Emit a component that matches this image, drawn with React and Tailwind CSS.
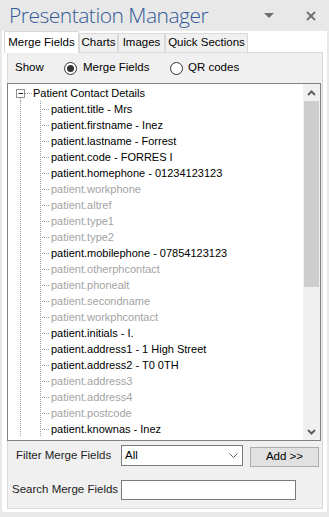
import React from 'react';

const FONT = { fontFamily: '"Liberation Sans", Arial, sans-serif' };

const ITEMS = [
  ['patient.title - Mrs', true],
  ['patient.firstname - Inez', true],
  ['patient.lastname - Forrest', true],
  ['patient.code - FORRES I', true],
  ['patient.homephone - 01234123123', true],
  ['patient.workphone', false],
  ['patient.altref', false],
  ['patient.type1', false],
  ['patient.type2', false],
  ['patient.mobilephone - 07854123123', true],
  ['patient.otherphcontact', false],
  ['patient.phonealt', false],
  ['patient.secondname', false],
  ['patient.workphcontact', false],
  ['patient.initials - I.', true],
  ['patient.address1 - 1 High Street', true],
  ['patient.address2 - T0 0TH', true],
  ['patient.address3', false],
  ['patient.address4', false],
  ['patient.postcode', false],
  ['patient.knownas - Inez', true],
];

function HeaderLines() {
  return (
    <svg width="25" height="16" className="shrink-0">
      <line x1="12.5" y1="13" x2="12.5" y2="16" stroke="#a0a0a0" strokeDasharray="1 1" />
      <line x1="17" y1="8.5" x2="25" y2="8.5" stroke="#a0a0a0" strokeDasharray="1 1" />
      <rect x="8.5" y="4.5" width="8" height="8" fill="#fff" stroke="#919191" />
      <line x1="10.5" y1="8.5" x2="15" y2="8.5" stroke="#222" />
    </svg>
  );
}

function ChildLines() {
  return (
    <svg width="43" height="16" className="shrink-0">
      <line x1="12.5" y1="0" x2="12.5" y2="16" stroke="#a0a0a0" strokeDasharray="1 1" />
      <line x1="32.5" y1="0" x2="32.5" y2="16" stroke="#a0a0a0" strokeDasharray="1 1" />
      <line x1="34" y1="8.5" x2="42" y2="8.5" stroke="#a0a0a0" strokeDasharray="1 1" />
    </svg>
  );
}

function Radio({ checked }) {
  return (
    <span className="w-[13px] h-[13px] rounded-full border border-[#333] bg-white flex items-center justify-center shrink-0">
      {checked && <span className="w-[7px] h-[7px] rounded-full bg-[#333]" />}
    </span>
  );
}

function Tab({ label, active, w }) {
  if (active) {
    return (
      <div
        className="h-[22px] bg-white border border-b-0 border-[#d9d9d9] flex items-center justify-center relative z-10 -mb-px text-[11.5px] text-black"
        style={{ width: w }}
      >
        {label}
      </div>
    );
  }
  return (
    <div
      className="h-[19px] bg-[#f0f0f0] border border-b-0 border-[#d9d9d9] flex items-center justify-center text-[11.5px] text-black"
      style={{ width: w }}
    >
      {label}
    </div>
  );
}

export default function App() {
  return (
    <div className="w-[329px] h-[517px] bg-[#e8e8e8] overflow-hidden" style={FONT}>
      {/* title bar */}
      <div className="h-[31px] flex items-center pl-[9px] pr-[13px]">
        <span
          className="text-[21px] text-[#345a98] font-light tracking-[-0.5px] leading-none"
          style={{ fontFamily: '"Open Sans", "Noto Sans", sans-serif' }}
        >
          Presentation Manager
        </span>
        <div className="flex-1" />
        <svg width="10" height="6" className="mr-[32px]">
          <polygon points="0,0 10,0 5,5" fill="#6e6e6e" />
        </svg>
        <svg width="10" height="10">
          <line x1="1" y1="1" x2="9" y2="9" stroke="#6e6e6e" strokeWidth="1.8" />
          <line x1="9" y1="1" x2="1" y2="9" stroke="#6e6e6e" strokeWidth="1.8" />
        </svg>
      </div>

      {/* tab control */}
      <div className="ml-[2px] w-[325px] h-[481px] bg-white">
        <div className="h-[21px] flex items-end pl-[2px]">
          <Tab label="Merge Fields" active w={75} />
          <Tab label="Charts" w={39} />
          <Tab label="Images" w={47} />
          <Tab label="Quick Sections" w={83} />
        </div>

        <div className="ml-[5px] w-[316px] h-[457px] bg-[#f0f0f0] border border-[#d9d9d9] flex flex-col">
          {/* show row */}
          <div className="h-[30px] flex items-center pl-[7px] text-[11.5px] text-black">
            <span className="w-[49px]">Show</span>
            <Radio checked />
            <span className="ml-[6px] w-[87px]">Merge Fields</span>
            <Radio />
            <span className="ml-[5px]">QR codes</span>
          </div>

          {/* tree */}
          <div className="-ml-px w-[314px] h-[358px] bg-white border border-[#828282] flex">
            <div className="flex-1 pt-px overflow-hidden text-[11px] leading-[16px]">
              <div className="h-[16px] flex items-center">
                <HeaderLines />
                <span className="text-black">Patient Contact Details</span>
              </div>
              {ITEMS.map(([t, on]) => (
                <div key={t} className="h-[16px] flex items-center">
                  <ChildLines />
                  <span className={on ? 'text-black' : 'text-[#a3a3a3]'}>{t}</span>
                </div>
              ))}
            </div>
            <div className="w-[17px] bg-[#f0f0f0] flex flex-col">
              <div className="h-[17px] flex items-center justify-center">
                <svg width="9" height="6">
                  <polyline points="1,5 4.5,1.5 8,5" fill="none" stroke="#606060" strokeWidth="2" />
                </svg>
              </div>
              <div className="h-[186px] mx-px bg-[#cdcdcd]" />
              <div className="flex-1" />
              <div className="h-[17px] flex items-center justify-center">
                <svg width="9" height="6">
                  <polyline points="1,1 4.5,4.5 8,1" fill="none" stroke="#606060" strokeWidth="2" />
                </svg>
              </div>
            </div>
          </div>

          {/* filter row */}
          <div className="mt-[4px] h-[21px] flex items-center text-[11.5px] text-[#1e1e1e]">
            <span className="pl-[8px] w-[113px]">Filter Merge Fields</span>
            <div className="w-[122px] h-[21px] bg-white border border-[#7a7a7a] flex items-center pl-[3px] pr-[4px] text-black">
              <span className="flex-1">All</span>
              <svg width="9" height="6">
                <polyline points="0.5,0.5 4.5,4.5 8.5,0.5" fill="none" stroke="#606060" strokeWidth="1" />
              </svg>
            </div>
            <div className="ml-[7px] mt-[3px] w-[69px] h-[20px] bg-[#e1e1e1] border border-[#adadad] flex items-center justify-center text-black">
              Add &gt;&gt;
            </div>
          </div>

          {/* search row */}
          <div className="mt-[14px] h-[20px] flex items-center text-[11.5px] text-[#1e1e1e]">
            <span className="pl-[4px] w-[113px]">Search Merge Fields</span>
            <div className="w-[175px] h-[20px] bg-white border border-[#7a7a7a]" />
          </div>
        </div>
      </div>
    </div>
  );
}
